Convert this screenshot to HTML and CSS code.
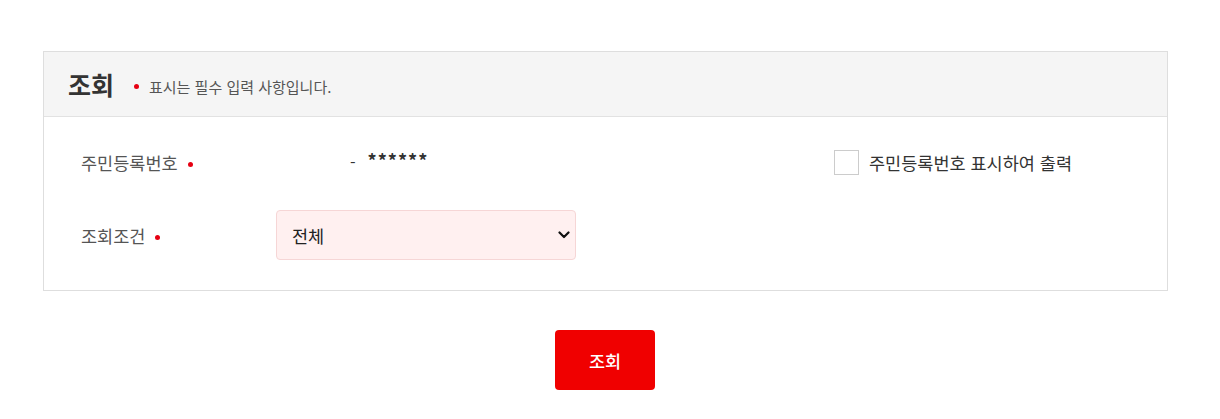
FILE: index.html
```html
<!DOCTYPE html>
<html lang="ko">
<head>
<meta charset="utf-8">
<link rel="stylesheet" href="styles.css">
</head>
<body>
<div class="page">
  <section class="panel">
    <div class="panel-head">
      <h2 class="title">조회</h2>
      <p class="note"><span class="dot"></span>표시는 필수 입력 사항입니다.</p>
    </div>
    <div class="panel-body">
      <div class="row">
        <div class="label">주민등록번호<span class="dot"></span></div>
        <div class="value">
          <span class="rrn-front"></span>
          <span class="dash">-</span>
          <span class="mask">******</span>
        </div>
        <label class="check">
          <span class="box"></span>
          <span class="check-text">주민등록번호 표시하여 출력</span>
        </label>
      </div>
      <div class="row">
        <div class="label">조회조건<span class="dot"></span></div>
        <div class="value">
          <div class="select">
            <span>전체</span>
            <svg class="chev" width="12" height="8" viewBox="0 0 12 8"><path d="M1.5 1.5 L6 6 L10.5 1.5" fill="none" stroke="#111" stroke-width="2.2" stroke-linecap="round" stroke-linejoin="round"/></svg>
          </div>
        </div>
      </div>
    </div>
  </section>
  <div class="actions">
    <button class="btn">조회</button>
  </div>
</div>
</body>
</html>
```
FILE: styles.css
```css
* { box-sizing: border-box; }
body {
  margin: 0;
  background: #fff;
  font-family: "Noto Sans CJK KR", "Noto Sans", sans-serif;
  color: #333;
}
.page {
  padding: 51px 0 0 43px;
  width: 1168px;
}
.panel {
  width: 1125px;
  border: 1px solid #dedede;
}
.panel-head {
  height: 65px;
  background: #f5f5f5;
  border-bottom: 1px solid #e2e2e2;
  display: flex;
  align-items: center;
  padding-left: 24px;
}
.title {
  margin: 0;
  font-size: 25px;
  font-weight: 700;
  color: #333;
  line-height: 1;
}
.note {
  margin: 5px 0 0 20px;
  font-size: 15px;
  color: #555;
  display: flex;
  align-items: center;
}
.dot {
  display: inline-block;
  width: 5px;
  height: 5px;
  border-radius: 50%;
  background: #e60012;
  margin-right: 10px;
}
.label .dot { margin: 0 0 0 10px; vertical-align: middle; }
.panel-body {
  padding: 20px 0 30px 37px;
  display: flex;
  flex-direction: column;
  gap: 23px;
}
.row {
  height: 50px;
  display: flex;
  align-items: center;
}
.label {
  width: 195px;
  font-size: 17.5px;
  color: #555;
}
.value {
  width: 558px;
  display: flex;
  align-items: center;
}
.rrn-front { width: 74px; }
.dash { font-size: 16px; color: #333; margin-right: 12px; }
.mask {
  font-size: 18px;
  font-weight: 700;
  color: #333;
  letter-spacing: 1px;
  position: relative;
  top: -2px;
}
.check {
  display: flex;
  align-items: center;
}
.box {
  width: 25px;
  height: 25px;
  border: 1px solid #ccc;
  background: #fff;
  margin-right: 10px;
}
.check-text { font-size: 17.5px; color: #333; }
.select {
  width: 300px;
  height: 50px;
  border: 1px solid #f6d6d6;
  border-radius: 4px;
  background: #fff0f0;
  display: flex;
  align-items: center;
  justify-content: space-between;
  padding: 0 5px 0 15px;
  font-size: 17.5px;
  color: #222;
}
.actions {
  width: 1124px;
  display: flex;
  justify-content: center;
  margin-top: 39px;
}
.btn {
  width: 100px;
  height: 60px;
  border: 0;
  border-radius: 4px;
  background: #f00000;
  color: #fff;
  font-family: "Noto Sans CJK KR", "Noto Sans", sans-serif;
  font-size: 17.5px;
  font-weight: 500;
}
```
